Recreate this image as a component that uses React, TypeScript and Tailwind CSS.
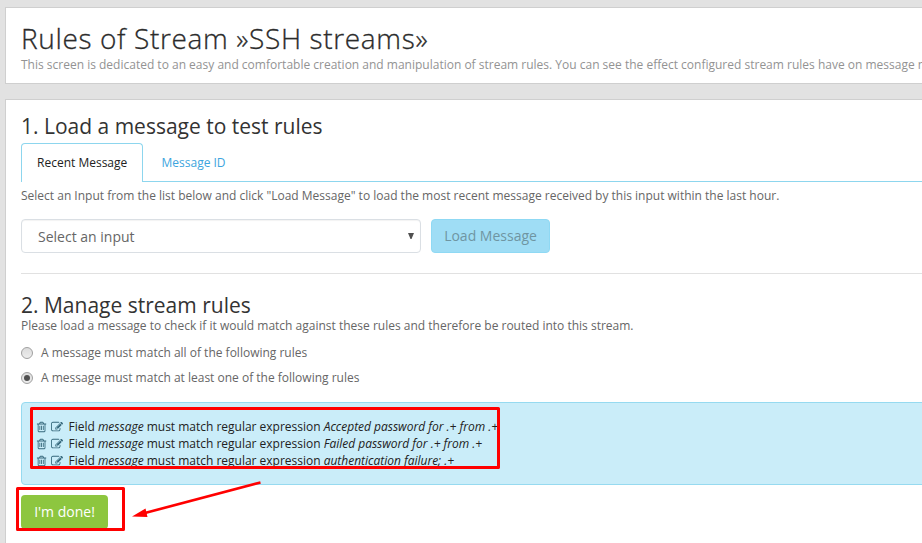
import type { ReactNode } from "react";

const TRASH =
  "M704 736v576q0 14-9 23t-23 9h-64q-14 0-23-9t-9-23v-576q0-14 9-23t23-9h64q14 0 23 9t9 23zm256 0v576q0 14-9 23t-23 9h-64q-14 0-23-9t-9-23v-576q0-14 9-23t23-9h64q14 0 23 9t9 23zm256 0v576q0 14-9 23t-23 9h-64q-14 0-23-9t-9-23v-576q0-14 9-23t23-9h64q14 0 23 9t9 23zm128 724v-948h-896v948q0 22 7 40.5t14.5 27 10.5 8.5h832q3 0 10.5-8.5t14.5-27 7-40.5zm-672-1076h448l-48-117q-7-9-17-11h-317q-10 2-17 11zm928 32v64q0 14-9 23t-23 9h-96v948q0 83-47 143.5t-113 60.5h-832q-66 0-113-58.5t-47-141.5v-952h-96q-14 0-23-9t-9-23v-64q0-14 9-23t23-9h309l70-167q15-37 54-63t79-26h320q40 0 79 26t54 63l70 167h309q14 0 23 9t9 23z";
const EDIT =
  "M888 1184l116-116-152-152-116 116v56h96v96h56zm440-720q-16-16-33 1l-350 350q-17 17-1 33t33-1l350-350q17-17 1-33zm80 594v190q0 119-84.5 203.5t-203.5 84.5h-832q-119 0-203.5-84.5t-84.5-203.5v-832q0-119 84.5-203.5t203.5-84.5h832q63 0 117 25 15 7 18 23 3 17-9 29l-49 49q-14 14-32 8-23-6-45-6h-832q-66 0-113 47t-47 113v832q0 66 47 113t113 47h832q66 0 113-47t47-113v-126q0-13 9-22l64-64q15-15 35-7t20 29zm-96-738l288 288-672 672h-288v-288zm444 132l-92 92-288-288 92-92q28-28 68-28t68 28l152 152q28 28 28 68t-28 68z";

const rules = [
  "Accepted password for .+ from .+",
  "Failed password for .+ from .+",
  "authentication failure; .+",
];

function Radio({ checked, children }: { checked?: boolean; children: ReactNode }) {
  return (
    <label className="flex h-[25px] items-center">
      <span className="mr-2 flex size-3 items-center justify-center rounded-full border border-[#a0a0a0] bg-linear-to-b from-[#dcdcdc] to-[#ededed]">
        {checked && <span className="size-1.5 rounded-full bg-[#505050]" />}
      </span>
      <span>{children}</span>
    </label>
  );
}

export default function App() {
  return (
    <div className="relative h-[543px] w-[922px] overflow-hidden bg-[#e2e2e2] pt-[7px] pl-[5px] font-['Open_Sans',sans-serif] text-xs leading-[17px] whitespace-nowrap text-[#666]">
      <header className="h-[77px] w-[940px] border border-[#cfcfcf] bg-white pt-[12px] pl-[15px]">
        <h1 className="h-9 text-[28px] leading-9 font-light tracking-[0.64px] text-[#2b2b2b] [-webkit-text-stroke:0.3px_#2b2b2b]">Rules of Stream »SSH streams»</h1>
        <p className="text-[#939393]">
          This screen is dedicated to an easy and comfortable creation and manipulation of stream rules. You can see the effect configured stream rules have on message matching.
        </p>
      </header>

      <main className="mt-[15px] h-[480px] w-[940px] border border-[#cfcfcf] bg-white pt-[14px] pl-[15px]">
        <h2 className="h-[29px] text-[21px] leading-6 font-normal text-[#333]">1. Load a message to test rules</h2>
        <nav className="flex h-[39px] border-b border-[#8dd6ee]">
          <span className="h-[39px] w-[122px] rounded-t border border-b-0 border-[#8dd6ee] bg-white pt-[10px] pl-[15px] text-[#222]">
            Recent Message
          </span>
          <span className="pt-[11px] pl-[18.5px] text-[#3da5de]">Message ID</span>
        </nav>
        <p className="mt-[5px]">
          Select an Input from the list below and click "Load Message" to load the most recent message received by this input within the last hour.
        </p>
        <div className="mt-[15px] flex gap-[10px] text-sm">
          <div className="flex h-[34px] w-[400px] items-center justify-between rounded border border-[#dadfe4] pr-[6px] pl-4 shadow-[inset_0_1px_1px_rgba(0,0,0,0.05)]">
            <span className="pt-[2px]">Select an input</span>
            <svg className="mb-[1px] h-[6px] w-[6px]" viewBox="0 0 6 6" fill="#505050">
              <path d="M0 0h6L3.5 6h-1z" />
            </svg>
          </div>
          <button className="h-[34px] w-[119px] rounded border border-[#8fd9f4] bg-[#9fddf5] text-[#6f95a2]">Load Message</button>
        </div>
        <hr className="mt-5 border-[#e1e1e1]" />

        <h2 className="mt-[19px] h-6 text-[21px] leading-6 font-normal text-[#333]">2. Manage stream rules</h2>
        <p>Please load a message to check if it would match against these rules and therefore be routed into this stream.</p>
        <div className="mt-[6px]">
          <Radio>A message must match all of the following rules</Radio>
          <Radio checked>A message must match at least one of the following rules</Radio>
        </div>
        <ul className="mt-[12px] h-[83px] rounded border border-[#96daf0] bg-[#caedf9] pt-[15px] pl-[14px] text-[#222]">
          {rules.map((rule) => (
            <li key={rule} className="flex h-[17px] items-center">
              <svg className="mr-[3px] size-3" viewBox="64 0 1792 1792" fill="#34677b">
                <path d={TRASH} />
              </svg>
              <svg className="mr-[5.5px] size-3" viewBox="0 0 1792 1792" fill="#34677b">
                <path d={EDIT} />
              </svg>
              <span className="tracking-[-0.01px]">
                Field <em>message</em> must match regular expression <em>{rule}</em>
              </span>
            </li>
          ))}
        </ul>
        <button className="mt-[10px] h-[34px] w-[87px] rounded bg-[#8dc63f] text-sm text-white">I'm done!</button>
      </main>

      <svg className="pointer-events-none absolute inset-0 size-full" viewBox="0 0 922 543" fill="none">
        <g stroke="#f00" strokeWidth="3" strokeLinejoin="round">
          <rect x="31.5" y="408.5" width="467" height="59" />
          <rect x="17.5" y="488.5" width="106" height="41" />
        </g>
        <path d="M260.500 482.500L143 513.500" stroke="#f00" strokeWidth="2.600" />
        <path d="M132 516.500L145.500 508.500L147.500 517Z" fill="#f00" />
      </svg>
    </div>
  );
}
